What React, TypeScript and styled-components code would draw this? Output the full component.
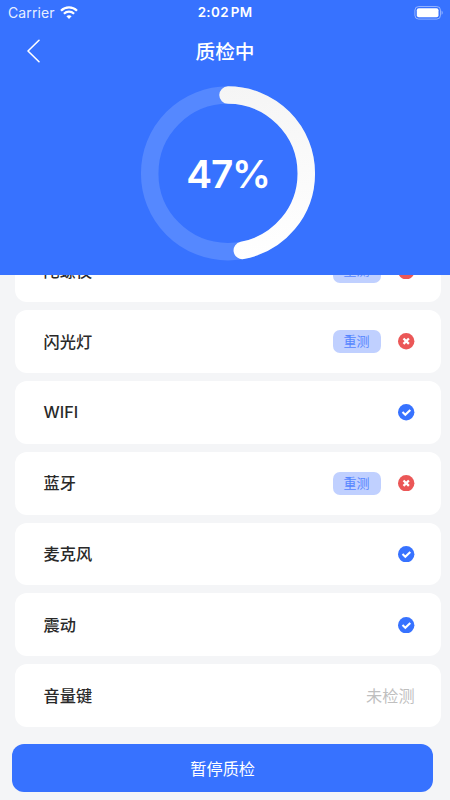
import React from 'react';
import styled, { createGlobalStyle } from 'styled-components';

const BLUE = '#3772ff';

const GlobalStyle = createGlobalStyle`
  * { box-sizing: border-box; }
  body {
    margin: 0;
    background: #f4f5f7;
    font-family: Inter, "Noto Sans CJK SC", sans-serif;
  }
`;

const Screen = styled.div`
  display: flex;
  flex-direction: column;
  width: 450px;
  height: 800px;
  overflow: hidden;
  background: #f4f5f7;
`;

const Header = styled.header`
  flex: none;
  height: 274.6px;
  background: ${BLUE};
  color: #fff;
`;

const StatusBar = styled.div`
  display: grid;
  grid-template-columns: 1fr auto 1fr;
  align-items: center;
  height: 25px;
  padding: 0 7px 0 8px;
`;

const Carrier = styled.div`
  display: flex;
  align-items: center;
  gap: 5.6px;
  font-size: 14px;
  line-height: 25px;
  letter-spacing: 0.1px;
  color: rgba(255, 255, 255, 0.9);
`;

const Clock = styled.div`
  font-size: 13.4px;
  font-weight: 600;
  line-height: 25px;
  letter-spacing: 0.35px;
  word-spacing: -1.9px;
  margin-left: -1px;
`;

const Battery = styled.svg`
  justify-self: end;
`;

const NavBar = styled.nav`
  display: grid;
  grid-template-columns: 66px 1fr 66px;
  align-items: center;
  height: 51px;
`;

const BackButton = styled.button`
  display: flex;
  height: 51px;
  padding: 0 0 0 26px;
  align-items: center;
  border: 0;
  background: none;
`;

const Title = styled.h1`
  margin: 0;
  padding-top: 2px;
  font-size: 19.7px;
  font-weight: 500;
  line-height: 30px;
  text-align: center;
`;

const Gauge = styled.div`
  display: grid;
  width: 176px;
  margin: 9px 0 0 140px;
  > * { grid-area: 1 / 1; }
`;

const Percent = styled.div`
  align-self: center;
  text-align: center;
  font-size: 38.8px;
  font-weight: 600;
  line-height: 48px;
  letter-spacing: -1.3px;
`;

const List = styled.main`
  flex: none;
  height: 457px;
  overflow: hidden;
  padding: 0 9px 0 15px;
`;

const Rows = styled.div`
  display: flex;
  flex-direction: column;
  gap: 8px;
  margin-top: -35.2px;
`;

const Row = styled.div`
  display: flex;
  flex: none;
  align-items: center;
  height: 62.8px;
  padding: 0 26.4px 0 28.6px;
  border-radius: 12px;
  background: #fff;
`;

const Name = styled.span`
  flex: 1;
  font-size: 16.2px;
  font-weight: 500;
  line-height: 24px;
  color: #292929;
`;

const Retest = styled.button`
  width: 48px;
  height: 23.4px;
  margin-right: 17.3px;
  padding: 0 1px 0 0;
  border: 0;
  border-radius: 7px;
  background: #c0d0ff;
  color: #5485ff;
  font: 400 13px/23px Inter, "Noto Sans CJK SC", sans-serif;
`;

const Pending = styled.span`
  font-size: 16.2px;
  line-height: 24px;
  color: #bfbfbf;
`;

const Footer = styled.footer`
  padding: 12.6px 17px 0 12.4px;
`;

const PauseButton = styled.button`
  width: 100%;
  height: 47.6px;
  padding: 3px 0 0;
  border: 0;
  border-radius: 12px;
  background: ${BLUE};
  color: #fff;
  font: 400 16.2px/44px Inter, "Noto Sans CJK SC", sans-serif;
`;

type State = 'failed' | 'passed' | 'pending';

const tests: { name: string; state: State }[] = [
  { name: '陀螺仪', state: 'failed' },
  { name: '闪光灯', state: 'failed' },
  { name: 'WIFI', state: 'passed' },
  { name: '蓝牙', state: 'failed' },
  { name: '麦克风', state: 'passed' },
  { name: '震动', state: 'passed' },
  { name: '音量键', state: 'pending' },
];

const StateIcon = ({ passed }: { passed: boolean }) => (
  <svg width="16.4" height="16.4" viewBox="0 0 16.4 16.4" fill="none">
    <circle cx="8.2" cy="8.2" r="8.2" fill={passed ? BLUE : '#eb5757'} />
    <path
      d={passed ? 'M4.5 8.1L7.3 10.7L12.3 5.9' : 'M5.5 5.5L10.9 10.9M10.9 5.5L5.5 10.9'}
      stroke="#fff"
      strokeWidth={passed ? 2.1 : 2.3}
    />
  </svg>
);

const WifiIcon = () => (
  <svg width="18" height="13" viewBox="0 0 18 13" fill="none">
    <path d="M1 4.7C5.5 0.3 12.5 0.3 17 4.7" stroke="#fff" strokeWidth="2.3" />
    <path d="M3.9 7.7C6.8 5 11.2 5 14.1 7.7" stroke="#fff" strokeWidth="2.2" />
    <path d="M6.4 10.3C7.9 9 10.1 9 11.6 10.3L9 12.9Z" fill="#fff" />
  </svg>
);

const RADIUS = 78.3;
const LENGTH = 2 * Math.PI * RADIUS;

const Ring = ({ value }: { value: number }) => (
  <svg width="176" height="177" viewBox="0 -0.4 176 177" fill="none">
    <defs>
      <linearGradient id="progress" gradientUnits="userSpaceOnUse" x1="176" y1="88" x2="0" y2="100">
        <stop offset="0" stopColor="#f5f5f5" />
        <stop offset="1" stopColor="#fff" />
      </linearGradient>
    </defs>
    <circle cx="88" cy="88" r={RADIUS} stroke="#5588ff" strokeWidth="17.5" />
    <circle
      cx="88"
      cy="88"
      r={RADIUS}
      stroke="url(#progress)"
      strokeWidth="17.5"
      strokeLinecap="round"
      strokeDasharray={`${(LENGTH * value) / 100} ${LENGTH}`}
      transform="rotate(-90 88 88)"
    />
  </svg>
);

export default function App() {
  return (
    <Screen>
      <GlobalStyle />
      <Header>
        <StatusBar>
          <Carrier>
            Carrier
            <WifiIcon />
          </Carrier>
          <Clock>2:02 PM</Clock>
          <Battery width="29" height="14" viewBox="0 0 29 14" fill="none">
            <rect x="0.9" y="0.5" width="25.6" height="12.6" rx="3.8" stroke="#fff" strokeOpacity="0.45" />
            <rect x="2.8" y="2.3" width="21.7" height="9" rx="2" fill="#fff" />
            <path d="M27.6 4.6V8.8Q28.7 8.1 28.7 6.7T27.6 4.6Z" fill="#fff" fillOpacity="0.5" />
          </Battery>
        </StatusBar>
        <NavBar>
          <BackButton aria-label="返回">
            <svg width="15" height="24" viewBox="0 0 15 24" fill="none">
              <path d="M13 1.3L2 12L13 22.7" stroke="#fff" strokeWidth="1.6" strokeLinecap="round" strokeLinejoin="round" />
            </svg>
          </BackButton>
          <Title>质检中</Title>
        </NavBar>
        <Gauge>
          <Ring value={47} />
          <Percent>47%</Percent>
        </Gauge>
      </Header>
      <List>
        <Rows>
          {tests.map(({ name, state }) => (
            <Row key={name}>
              <Name>{name}</Name>
              {state === 'failed' && <Retest>重测</Retest>}
              {state === 'pending' ? <Pending>未检测</Pending> : <StateIcon passed={state === 'passed'} />}
            </Row>
          ))}
        </Rows>
      </List>
      <Footer>
        <PauseButton>暂停质检</PauseButton>
      </Footer>
    </Screen>
  );
}
